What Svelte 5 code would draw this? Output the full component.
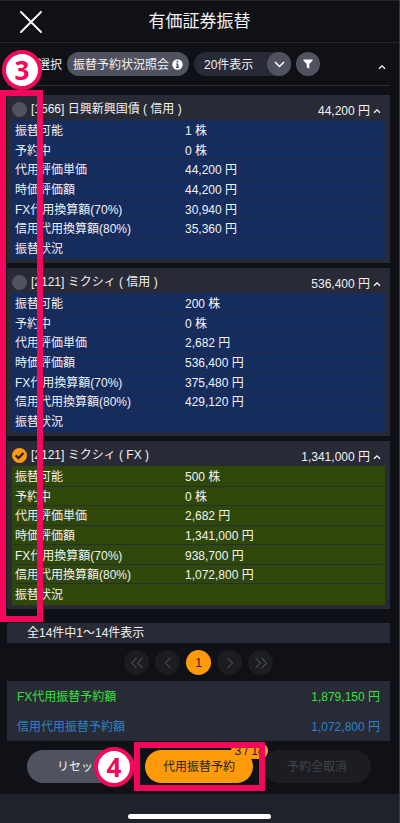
<script lang="ts">
  const labels = [
    "振替可能",
    "予約中",
    "代用評価単価",
    "時価評価額",
    "FX代用換算額(70%)",
    "信用代用換算額(80%)",
    "振替状況",
  ];

  let stocks = $state([
    {
      name: "[1566] 日興新興国債 ( 信用 )",
      price: "44,200 円",
      checked: false,
      open: true,
      values: ["1 株", "0 株", "44,200 円", "44,200 円", "30,940 円", "35,360 円", ""],
    },
    {
      name: "[2121] ミクシィ ( 信用 )",
      price: "536,400 円",
      checked: false,
      open: true,
      values: ["200 株", "0 株", "2,682 円", "536,400 円", "375,480 円", "429,120 円", ""],
    },
    {
      name: "[2121] ミクシィ ( FX )",
      price: "1,341,000 円",
      checked: true,
      open: true,
      values: ["500 株", "0 株", "2,682 円", "1,341,000 円", "938,700 円", "1,072,800 円", ""],
    },
  ]);
</script>

{#snippet caret()}
  <svg width="8" height="6" viewBox="0 0 8 6" fill="none" stroke="#fff" stroke-width="1.3">
    <path d="M1 4.8 4 1.8 7 4.8" />
  </svg>
{/snippet}

<div class="page">
  <header>
    <button class="close" aria-label="閉じる">
      <svg width="22" height="22" viewBox="0 0 22 22" stroke="#fff" stroke-width="1.9" stroke-linecap="round">
        <path d="M1 1 21 21M21 1 1 21" />
      </svg>
    </button>
    <h1>有価証券振替</h1>
  </header>

  <div class="toolbar">
    <span class="marker step3">3</span>
    <span class="choose">選択</span>
    <button class="status">
      振替予約状況照会
      <svg width="11" height="11" viewBox="0 0 11 11">
        <circle cx="5.5" cy="5.5" r="5.2" fill="#fff" />
        <path d="M4.6 1.8h1.8v1.6H4.6zM4 4.5h2.4v3.3H7v1.1H4V7.8h.7V5.6H4z" fill="#50535f" />
      </svg>
    </button>
    <div class="per-page">
      <select aria-label="表示件数">
        <option>20件表示</option>
        <option>50件表示</option>
      </select>
      <span class="arrow">
        <svg width="11" height="7" viewBox="0 0 11 7" fill="none" stroke="#fff" stroke-width="1.5">
          <path d="M1 1 5.5 5.5 10 1" />
        </svg>
      </span>
    </div>
    <button class="filter" aria-label="絞り込み">
      <svg width="10" height="10" viewBox="0 0 10 10" fill="#fff">
        <path d="M.4.5h9.2v1L6.3 5v4.7L3.7 8.2V5L.4 1.5z" />
      </svg>
    </button>
    <button class="fold" aria-label="折りたたむ">{@render caret()}</button>
  </div>

  <main>
    <div class="cards">
      {#each stocks as stock, i}
        <section class="card">
          <div class="head">
            <input type="checkbox" id="stock-{i}" bind:checked={stock.checked} />
            <label for="stock-{i}">{stock.name}</label>
            <button class="price" onclick={() => (stock.open = !stock.open)}>
              {stock.price}
              {@render caret()}
            </button>
          </div>
          {#if stock.open}
            <table class:selected={stock.checked}>
              <tbody>
                {#each labels as label, n}
                  <tr>
                    <th scope="row">{label}</th>
                    <td>{stock.values[n]}</td>
                  </tr>
                {/each}
              </tbody>
            </table>
          {/if}
        </section>
      {/each}
      <div class="frame cards-frame"></div>
    </div>

    <p class="count">全14件中1〜14件表示</p>

    <nav>
      <button disabled aria-label="最初">
        <svg width="14" height="12" viewBox="0 0 14 12"><path d="M6.5 1 1.5 6l5 5M12.5 1l-5 5 5 5" /></svg>
      </button>
      <button disabled aria-label="前へ">
        <svg width="14" height="12" viewBox="0 0 14 12"><path d="M9.5 1l-5 5 5 5" /></svg>
      </button>
      <button class="current">1</button>
      <button disabled aria-label="次へ">
        <svg width="14" height="12" viewBox="0 0 14 12"><path d="M4.5 1l5 5-5 5" /></svg>
      </button>
      <button disabled aria-label="最後">
        <svg width="14" height="12" viewBox="0 0 14 12"><path d="M1.5 1l5 5-5 5M7.5 1l5 5-5 5" /></svg>
      </button>
    </nav>

    <dl>
      <div class="fx">
        <dt>FX代用振替予約額</dt>
        <dd>1,879,150 円</dd>
      </div>
      <div class="margin">
        <dt>信用代用振替予約額</dt>
        <dd>1,072,800 円</dd>
      </div>
    </dl>

    <div class="actions">
      <button class="reset">リセット</button>
      <div class="reserve">
        <button>代用振替予約</button>
        <span class="badge">3 / 14</span>
        <div class="frame reserve-frame"></div>
        <span class="marker step4">4</span>
      </div>
      <button class="cancel" disabled>予約全取消</button>
    </div>
  </main>

  <footer><span class="home"></span></footer>
</div>

<style>
  :global(body) {
    margin: 0;
    background: #101116;
  }
  .page {
    box-sizing: border-box;
    display: flex;
    flex-direction: column;
    min-height: 100vh;
    overflow: hidden;
    border-right: 1px solid #37383c;
    background: #101116;
    color: #f2f2f4;
    font-family: "Liberation Sans", "Noto Sans CJK JP", sans-serif;
    font-size: 12px;
    line-height: 16px;
  }
  button,
  select {
    margin: 0;
    padding: 0;
    border: 0;
    background: none;
    color: inherit;
    font: inherit;
  }
  button {
    display: flex;
    align-items: center;
    justify-content: center;
    white-space: nowrap;
  }

  header {
    position: relative;
    display: flex;
    align-items: center;
    justify-content: center;
    height: 41px;
    border-top: 1px solid #25262b;
    border-bottom: 1px solid #25262b;
  }
  .close {
    position: absolute;
    left: 20px;
  }
  h1 {
    margin: 0;
    font-size: 17px;
    font-weight: 400;
    line-height: 24px;
  }

  .toolbar {
    position: relative;
    display: flex;
    align-items: center;
    height: 42px;
    margin: 0 9px 0 7px;
    border-bottom: 1px solid #2c2d33;
  }
  .choose {
    margin: 2px 5px 0 31px;
  }
  .status {
    box-sizing: border-box;
    gap: 3px;
    width: 122px;
    height: 24px;
    padding-top: 1px;
    border-radius: 12px;
    background: #50535f;
  }
  .per-page {
    position: relative;
    margin-left: 5px;
  }
  select {
    display: block;
    box-sizing: border-box;
    width: 97px;
    height: 24px;
    padding: 1px 0 0 10px;
    border-radius: 12px;
    background: #282a36;
    appearance: none;
  }
  .arrow {
    position: absolute;
    top: 0;
    right: 0;
    display: flex;
    align-items: center;
    justify-content: center;
    width: 24px;
    height: 24px;
    border-radius: 50%;
    background: #50535f;
    pointer-events: none;
  }
  .filter {
    width: 24px;
    height: 24px;
    margin-left: 5px;
    border-radius: 50%;
    background: #50535f;
  }
  .fold {
    margin: 6px 4px 0 auto;
  }

  main {
    padding: 9px 9px 11px 7px;
  }
  .cards {
    position: relative;
    display: flex;
    flex-direction: column;
    gap: 5px;
  }
  .card {
    padding: 0 5px 4px;
    background: #282a36;
  }
  .head {
    display: flex;
    align-items: center;
    height: 25px;
    padding-top: 3px;
    box-sizing: border-box;
  }
  .head label {
    margin-left: 4px;
    line-height: 20px;
  }
  .price {
    gap: 3px;
    margin: 4px 4px 0 auto;
  }
  input {
    width: 15px;
    height: 15px;
    margin: 1px 0 0;
    border-radius: 50%;
    background: #50535f;
    appearance: none;
  }
  input:checked {
    background: #ff9a0a
      url("data:image/svg+xml,%3Csvg xmlns='http://www.w3.org/2000/svg' viewBox='0 0 15 15'%3E%3Cpath d='M3.6 7.4 6.5 10.2 11.4 5' fill='none' stroke='%23222430' stroke-width='2.2'/%3E%3C/svg%3E");
  }

  table {
    width: 100%;
    height: 139px;
    padding: 1px 2px 2px;
    border-spacing: 0;
    background: #152c5e;
  }
  table.selected {
    background: #2f480a;
  }
  th,
  td {
    padding: 2px 0 0;
    border-bottom: 1px solid #262b4a;
    font-weight: 400;
    text-align: left;
  }
  .selected th,
  .selected td {
    border-color: #2a2c38;
  }
  tr:last-child th,
  tr:last-child td {
    border-bottom: 0;
  }
  th {
    width: 170px;
    padding-left: 1px;
  }

  .count {
    margin: 14px 0 0;
    padding: 2px 20px;
    background: #282a36;
  }

  nav {
    display: flex;
    justify-content: center;
    gap: 6px;
    margin: 7px 0 6px;
  }
  nav button {
    width: 25px;
    height: 25px;
    border-radius: 50%;
    background: #1c1d22;
  }
  nav path {
    fill: none;
    stroke: #44464d;
    stroke-width: 1.2;
  }
  nav .current {
    background: #ff9a0a;
    color: #22232c;
  }

  dl {
    margin: 0;
    background: #282a36;
  }
  dl div {
    box-sizing: border-box;
    display: flex;
    align-items: center;
    justify-content: space-between;
    height: 30px;
    padding: 2px 10px 0;
  }
  dd {
    margin: 0;
  }
  .fx {
    color: #35e23a;
  }
  .margin {
    color: #2a83cc;
  }

  .actions {
    display: flex;
    gap: 10px;
    padding: 9px 19px 0 20px;
  }
  .actions > * {
    flex: 1;
  }
  .actions button {
    height: 33px;
    border-radius: 17px;
  }
  .reset {
    background: #50535f;
  }
  .reserve {
    position: relative;
    z-index: 1;
  }
  .reserve button {
    width: 100%;
    background: #ff9a0a;
    color: #22232c;
  }
  .cancel {
    background: #1c1d22;
    color: #41434b;
  }
  .badge {
    position: absolute;
    top: -7px;
    right: -15px;
    width: 37px;
    border-radius: 8px;
    background: #ff9a0a;
    color: #22232c;
    line-height: 16px;
    text-align: center;
  }

  .frame {
    position: absolute;
    border: 6px solid #f3085c;
    pointer-events: none;
  }
  .cards-frame {
    top: -5px;
    bottom: -13px;
    left: -7px;
    width: 31px;
  }
  .reserve-frame {
    top: -8px;
    right: -12px;
    bottom: -8px;
    left: -11px;
  }
  .marker {
    position: absolute;
    z-index: 2;
    box-sizing: border-box;
    width: 40px;
    height: 40px;
    border: 4px solid #f3085c;
    border-radius: 50%;
    background: #fff;
    color: #f3085c;
    font: 700 26px/32px "Noto Sans", sans-serif;
    text-align: center;
  }
  .step3 {
    top: 7px;
    left: -5px;
  }
  .step4 {
    top: -3px;
    left: -51px;
  }

  footer {
    display: flex;
    flex: 1;
    align-items: flex-end;
    justify-content: center;
    padding: 20px 0 4px;
    background: #1e222b;
  }
  .home {
    width: 36%;
    height: 5px;
    border-radius: 3px;
    background: #fff;
  }
</style>
